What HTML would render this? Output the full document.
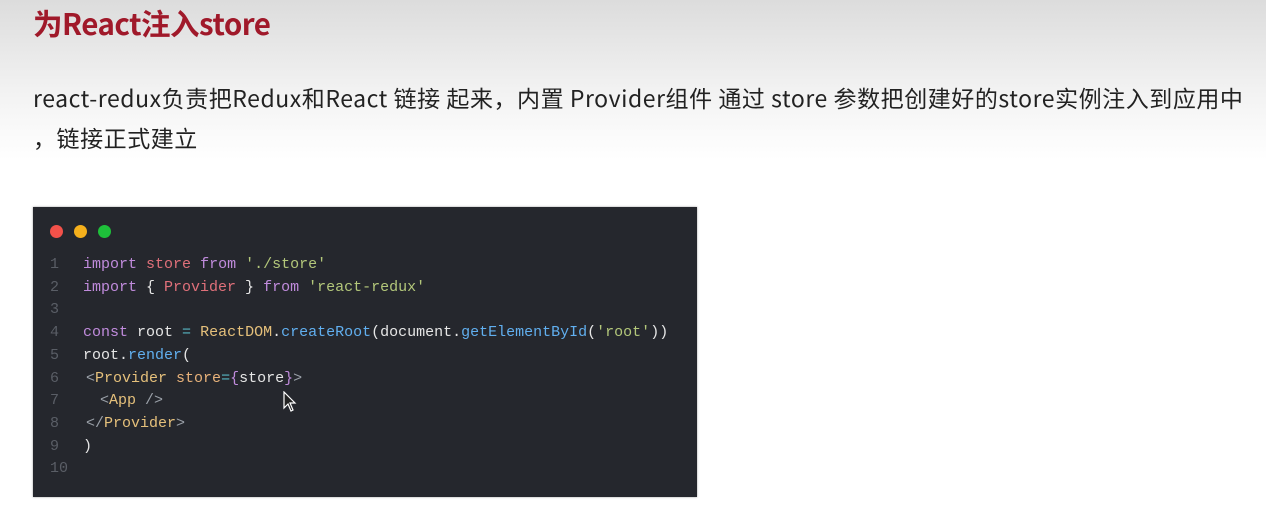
<!DOCTYPE html>
<html><head><meta charset="utf-8"><style>
html,body{margin:0;padding:0;}
body{width:1266px;height:522px;overflow:hidden;position:relative;background:linear-gradient(#dcdcdc 0px,#f2f2f2 90px,#ffffff 160px,#ffffff 522px);font-family:"Noto Sans CJK SC","Liberation Sans",sans-serif;}
.t{position:absolute;left:33px;top:1px;font-size:29.5px;font-weight:bold;color:#a0192a;white-space:nowrap;letter-spacing:-0.5px;line-height:44px}
.p{position:absolute;left:33px;font-size:23px;color:#222;white-space:nowrap;line-height:30px;letter-spacing:0.55px}
.box{position:absolute;left:33px;top:207px;width:664px;height:290px;background:#25272d;box-shadow:0 0 2px rgba(0,0,0,.4)}
.d{position:absolute;top:225px;width:13px;height:13px;border-radius:50%}
.code{position:absolute;left:50px;top:254px;font-family:"Liberation Mono",monospace;font-size:15px;line-height:22.7px;color:#e6e6e6;white-space:pre}
.n{color:#5a5e66;display:inline-block;width:33px}
.i1{display:inline-block;width:3px}.i2{display:inline-block;width:17px}
.k{color:#c08bdc}.r{color:#e0707a}.s{color:#b3c77a}.y{color:#e5c07b}.b{color:#61afef}.g{color:#9aa0a8}.o{color:#e8b27a}.c{color:#56b6c2}
</style></head><body>
<div class="t">为React注入store</div>
<div class="p" style="top:82px">react-redux负责把Redux和React 链接 起来，内置 Provider组件 通过 store 参数把创建好的store实例注入到应用中</div>
<div class="p" style="top:122px">，链接正式建立</div>
<div class="box"></div>
<div class="d" style="left:50px;background:#f2514a"></div>
<div class="d" style="left:74px;background:#f5b01c"></div>
<div class="d" style="left:98px;background:#1ec03a"></div>
<div class="code"><span class="n">1</span><span class="k">import</span> <span class="r">store</span> <span class="k">from</span> <span class="s">'./store'</span>
<span class="n">2</span><span class="k">import</span> { <span class="r">Provider</span> } <span class="k">from</span> <span class="s">'react-redux'</span>
<span class="n">3</span>
<span class="n">4</span><span class="k">const</span> root <span class="c">=</span> <span class="y">ReactDOM</span>.<span class="b">createRoot</span>(document.<span class="b">getElementById</span>(<span class="s">'root'</span>))
<span class="n">5</span>root.<span class="b">render</span>(
<span class="n">6</span><span class="i1"></span><span class="g">&lt;</span><span class="y">Provider</span> <span class="o">store</span><span class="c">=</span><span class="k">{</span>store<span class="k">}</span><span class="g">&gt;</span>
<span class="n">7</span><span class="i2"></span><span class="g">&lt;</span><span class="y">App</span> <span class="g">/&gt;</span>
<span class="n">8</span><span class="i1"></span><span class="g">&lt;/</span><span class="y">Provider</span><span class="g">&gt;</span>
<span class="n">9</span>)
<span class="n">10</span></div>
<svg style="position:absolute;left:283px;top:391px" width="14" height="22" viewBox="0 0 14 22"><path d="M1 1 L1 17 L5 13 L8 20 L10 19 L7 12 L12 12 Z" fill="#222" stroke="#fff" stroke-width="1.2"/></svg>
</body></html>
